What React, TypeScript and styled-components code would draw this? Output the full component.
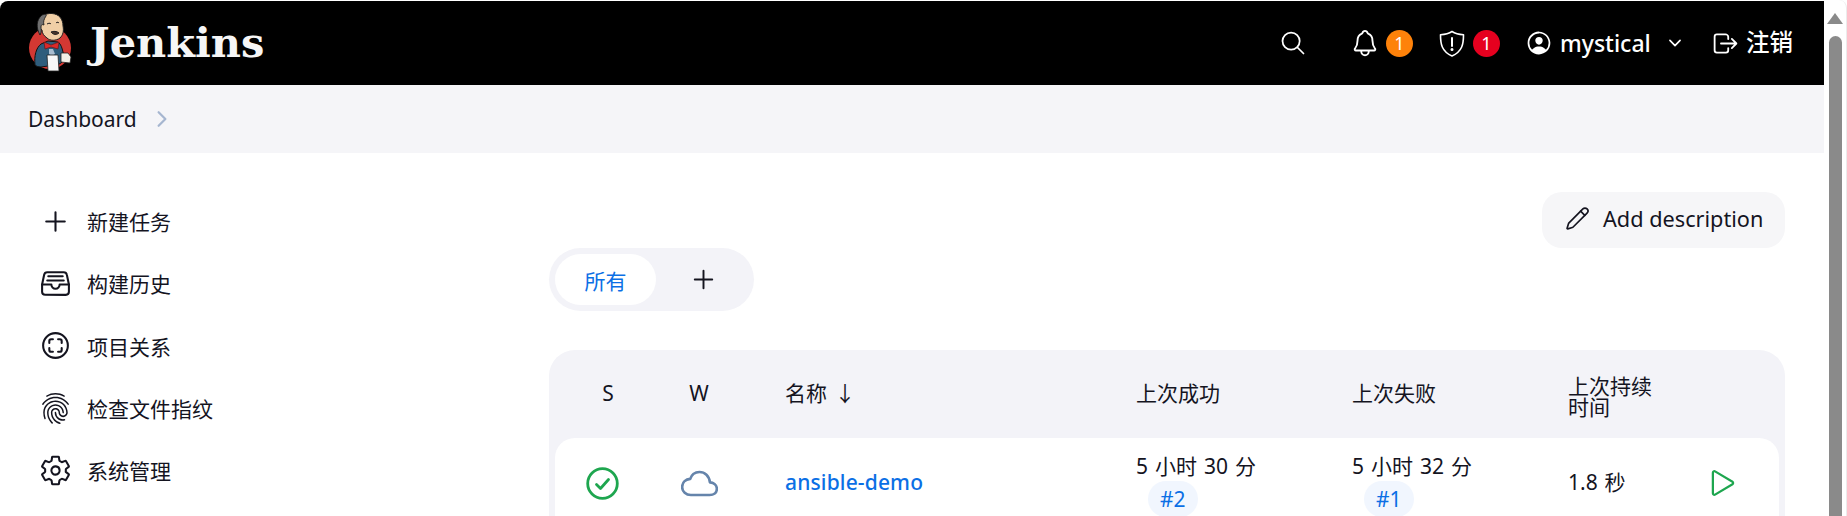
import React from "react";
import styled, { createGlobalStyle } from "styled-components";
import {
  IoAddOutline, IoFileTrayFullOutline, IoScanCircleOutline, IoFingerPrintOutline,
  IoSettingsOutline, IoSearchOutline, IoNotificationsOutline,
  IoPersonCircleOutline, IoChevronDownOutline, IoLogOutOutline, IoCloudOutline,
  IoPlayOutline, IoChevronForwardOutline,
} from "react-icons/io5";
import { Pencil } from "lucide-react";

const Global = createGlobalStyle`
  html, body { margin: 0; height: 100%; overflow: hidden; background: #fff; }
  body { font-family: "Noto Sans", "Noto Sans CJK SC", sans-serif; color: #14141f; font-size: 21px; }
`;

const Page = styled.div`
  display: flex;
  width: 1847px;
  height: 516px;
  overflow: hidden;
  background: #fff;
`;
const Content = styled.div`
  width: 1824px;
  flex: none;
`;
const Header = styled.header`
  height: 84px;
  margin-top: 1px;
  background: #000;
  border-top-left-radius: 8px;
  display: flex;
  align-items: center;
  padding: 0 31px 0 28px;
  color: #fff;
`;
const Brand = styled.div`
  display: flex;
  align-items: center;
  gap: 17px;
  margin-right: auto;
`;
const BrandName = styled.span`
  font-family: "DejaVu Serif", serif;
  font-weight: 700;
  font-size: 41.5px;
  line-height: 1;
  color: #f6f6f6;
`;
const HeaderGroup = styled.div`
  display: flex;
  align-items: center;
`;
const IconSlot = styled.span<{ $w: number; $ml?: number; $mr?: number; $c?: string }>`
  display: flex;
  align-items: center;
  justify-content: center;
  width: ${(p) => p.$w}px;
  margin-left: ${(p) => p.$ml ?? 0}px;
  margin-right: ${(p) => p.$mr ?? 0}px;
  color: ${(p) => p.$c ?? "inherit"};
  flex: none;
`;
const Badge = styled.span<{ $bg: string }>`
  width: 27px;
  height: 27px;
  border-radius: 50%;
  background: ${(p) => p.$bg};
  color: #fff;
  font-size: 18px;
  font-weight: 400;
  line-height: 27px;
  text-align: center;
  flex: none;
`;
const UserName = styled.span`
  font-size: 23px;
  font-weight: 500;
  line-height: 1;
  width: 92px;
  white-space: nowrap;
`;
const Logout = styled.span`
  font-size: 23.5px;
  font-weight: 500;
  line-height: 1;
  width: 47px;
  white-space: nowrap;
`;
const Crumbs = styled.nav`
  height: 68px;
  background: #f5f5f8;
  display: flex;
  align-items: center;
  padding-left: 28px;
  gap: 13px;
  color: #14141f;
`;
const Crumb = styled.span`
  font-size: 21px;
  line-height: 1;
`;
const Body = styled.div`
  display: grid;
  grid-template-columns: 549px 1236px;
  padding-top: 39px;
`;
const Side = styled.aside`
  display: flex;
  flex-direction: column;
  margin-top: -2px;
  padding-left: 39px;
`;
const SideItem = styled.a`
  display: flex;
  align-items: center;
  height: 62.3px;
  gap: 15px;
  font-size: 21px;
  color: #14141f;
`;
const SideIcon = styled.span`
  display: flex;
  align-items: center;
  justify-content: center;
  width: 33px;
  height: 33px;
  flex: none;
`;
const Main = styled.main`
  display: flex;
  flex-direction: column;
`;
const Actions = styled.div`
  display: flex;
  justify-content: flex-end;
  height: 56px;
`;
const ActionButton = styled.button`
  display: flex;
  align-items: center;
  gap: 13px;
  width: 243px;
  height: 56px;
  padding: 0 0 3px 23px;
  border: 0;
  border-radius: 20px;
  background: #f6f6f8;
  font: inherit;
  font-size: 21.7px;
  color: #14141f;
  white-space: nowrap;
`;
const Tabs = styled.div`
  display: flex;
  align-items: center;
  width: 205px;
  height: 63px;
  padding: 6px;
  box-sizing: border-box;
  border-radius: 32px;
  background: #f3f3f8;
  margin-bottom: 39px;
`;
const ActiveTab = styled.span`
  display: flex;
  align-items: center;
  justify-content: center;
  flex: none;
  width: 101px;
  height: 51px;
  border-radius: 26px;
  background: #fff;
  color: #0b6fe5;
  font-size: 21px;
`;
const AddTab = styled.span`
  display: flex;
  align-items: center;
  justify-content: center;
  flex: none;
  width: 94px;
  color: #14141f;
`;
const Table = styled.div`
  background: #f3f3f8;
  border-radius: 26px 26px 0 0;
  padding: 0 6px;
  height: 200px;
`;
const HeadRow = styled.div`
  display: grid;
  grid-template-columns: 106px 76px 48px 351px 216px 216px 1fr;
  align-items: center;
  height: 88px;
  padding-bottom: 2px;
  box-sizing: border-box;
`;
const HeadCell = styled.div<{ $center?: boolean; $wrapped?: boolean }>`
  font-size: 21px;
  line-height: ${(p) => (p.$wrapped ? 21 : 23)}px;
  margin-top: ${(p) => (p.$wrapped ? 7 : 0)}px;
  word-spacing: 2px;
  color: #14141f;
  justify-self: ${(p) => (p.$center ? "center" : "start")};
`;
const Row = styled.div`
  display: grid;
  grid-template-columns: 94px 100px 36px 351px 216px 216px 123px 64px;
  align-items: center;
  height: 90px;
  background: #fff;
  border-radius: 20px 20px 0 0;
`;
const Cell = styled.div<{ $stacked?: boolean }>`
  font-size: 21px;
  line-height: 28px;
  word-spacing: 1.5px;
  display: flex;
  flex-direction: column;
  align-items: flex-start;
  margin-bottom: 2px;
  padding-top: ${(p) => (p.$stacked ? 5 : 0)}px;
`;
const IconCell = styled.div`
  display: flex;
  justify-content: center;
`;
const CloudIcon = styled(IoCloudOutline)`
  path { stroke-width: 36px; }
`;
const JobLink = styled.a`
  color: #0b6fe5;
  font-weight: 500;
  letter-spacing: 0.15px;
`;
const BuildPill = styled.span`
  margin: 1px 0 0 12px;
  padding: 4px 12px 3px;
  border-radius: 20px;
  background: #f1f6fe;
  color: #0b6fe5;
  font-size: 21px;
  line-height: 29px;
`;
const Scroll = styled.div`
  flex: none;
  width: 23px;
  box-sizing: border-box;
  background: #fff;
  border-right: 1px solid #ececec;
  border-top-right-radius: 8px;
  display: flex;
  flex-direction: column;
  align-items: center;
`;
const ScrollArrow = styled.div`
  width: 0;
  height: 0;
  margin-top: 13px;
  border-left: 8px solid transparent;
  border-right: 8px solid transparent;
  border-bottom: 11px solid #8a8a8a;
`;
const ScrollThumb = styled.div`
  width: 13px;
  margin-top: 12px;
  flex: 1;
  background: #8a8a8a;
  border-radius: 7px 7px 0 0;
`;

const JenkinsLogo = () => (
  <svg width="45" height="60" viewBox="0 0 45 60" aria-hidden="true">
    <circle cx="22" cy="35" r="21" fill="#d33833" />
    <path d="M7 52c-1-9 1-17 6-21l7-3 10 1c3 2 4 6 5 10l1 8c-2 3-6 5-9 5l-14 2c-3 0-5-1-6-2z" fill="#2f5d7c" stroke="#111" strokeWidth="1" />
    <path d="M10 11C10 4 17 0 24 0.500 31 1 35 6 35 13c1 5 0 9-3 12-4 3-10 3-13 0-3-2-5-5-5-8-2-1-4-3-4-6z" fill="#f0cfa6" stroke="#222" strokeWidth="1" />
    <path d="M12 22C8 15 8 7 14 2c3-1 5-1 4 1-2 3-3 6-2 9-2-1-3 0-3 2s1 5-1 8z" fill="#6f6f6f" stroke="#111" strokeWidth="0.8" />
    <path d="M23 19c2-1 6-1 8 1-2 2-6 2-8-1zM19 11c2-1 3-1 4 0M28 10c1-1 2-1 3 0" fill="#49352b" stroke="#222" strokeWidth="1" />
    <path d="M16 29l7 3 8-3-1 7-7-2-6 2z" fill="#d92a2a" stroke="#5a1010" strokeWidth="0.6" />
    <path d="M21 36h4l2 5-3 2-3-2z" fill="#a9bdd0" />
    <path d="M19 42h11l1 16H20z" fill="#f8f8f8" stroke="#222" strokeWidth="0.8" />
    <path d="M33 40h7l3 4-1 6-9-1z" fill="#f2efe6" stroke="#222" strokeWidth="0.8" />
  </svg>
);

const ShieldAlert = () => (
  <svg width="26" height="27" viewBox="0 0 26 27" fill="none" stroke="#fff" strokeWidth="1.6" strokeLinecap="round" strokeLinejoin="round" aria-hidden="true">
    <path d="M13 1.500c3 2 7 3 11.500 3.300 0 9-1 16.500-11.500 21.200C2.500 21.300 1.500 13.800 1.500 4.800 6 4.500 10 3.500 13 1.500z" />
    <path d="M13 8v8" strokeWidth="2" />
    <circle cx="13" cy="19.500" r="0.700" fill="#fff" />
  </svg>
);

const SuccessIcon = () => (
  <svg width="33" height="33" viewBox="0 0 33 33" fill="none" aria-hidden="true">
    <circle cx="16.500" cy="16.500" r="14.800" stroke="#1ea64f" strokeWidth="2.800" />
    <path d="M10.500 17.500l4 4 8-9" stroke="#1ea64f" strokeWidth="2.800" strokeLinecap="round" strokeLinejoin="round" />
  </svg>
);

const sideItems: [React.ReactNode, string][] = [
  [<IoAddOutline size={33} />, "新建任务"],
  [<IoFileTrayFullOutline size={33} />, "构建历史"],
  [<IoScanCircleOutline size={33} />, "项目关系"],
  [<IoFingerPrintOutline size={33} />, "检查文件指纹"],
  [<IoSettingsOutline size={33} />, "系统管理"],
];

export default function App() {
  return (
    <Page>
      <Global />
      <Content>
        <Header>
          <Brand>
            <JenkinsLogo />
            <BrandName>Jenkins</BrandName>
          </Brand>
          <HeaderGroup>
            <IconSlot $w={28} $mr={43}><IoSearchOutline size={28} /></IconSlot>
            <IconSlot $w={30} $mr={6}><IoNotificationsOutline size={30} /></IconSlot>
            <Badge $bg="#fe820a">1</Badge>
            <IconSlot $w={26} $ml={26} $mr={8}><ShieldAlert /></IconSlot>
            <Badge $bg="#e6001f">1</Badge>
            <IconSlot $w={28} $ml={25} $mr={7}><IoPersonCircleOutline size={28} /></IconSlot>
            <UserName>mystical</UserName>
            <IconSlot $w={18} $ml={14} $mr={27}><IoChevronDownOutline size={20} /></IconSlot>
            <IconSlot $w={29} $mr={6}><IoLogOutOutline size={29} /></IconSlot>
            <Logout>注销</Logout>
          </HeaderGroup>
        </Header>
        <Crumbs>
          <Crumb>Dashboard</Crumb>
          <IconSlot $w={24} $c="#a6b6d0"><IoChevronForwardOutline size={24} /></IconSlot>
        </Crumbs>
        <Body>
          <Side>
            {sideItems.map(([icon, label]) => (
              <SideItem key={label}>
                <SideIcon>{icon}</SideIcon>
                {label}
              </SideItem>
            ))}
          </Side>
          <Main>
            <Actions>
              <ActionButton>
                <Pencil size={25} strokeWidth={1.6} />
                Add description
              </ActionButton>
            </Actions>
            <Tabs>
              <ActiveTab>所有</ActiveTab>
              <AddTab><IoAddOutline size={31} /></AddTab>
            </Tabs>
            <Table>
              <HeadRow>
                <HeadCell $center>S</HeadCell>
                <HeadCell $center>W</HeadCell>
                <HeadCell />
                <HeadCell>名称 ↓</HeadCell>
                <HeadCell>上次成功</HeadCell>
                <HeadCell>上次失败</HeadCell>
                <HeadCell $wrapped>上次持续<br />时间</HeadCell>
              </HeadRow>
              <Row>
                <IconCell><SuccessIcon /></IconCell>
                <IconCell><CloudIcon size={37} color="#6584ab" /></IconCell>
                <Cell />
                <Cell><JobLink>ansible-demo</JobLink></Cell>
                <Cell $stacked>5 小时 30 分<BuildPill>#2</BuildPill></Cell>
                <Cell $stacked>5 小时 32 分<BuildPill>#1</BuildPill></Cell>
                <Cell>1.8 秒</Cell>
                <IconCell><IoPlayOutline size={36} color="#1ea64f" /></IconCell>
              </Row>
            </Table>
          </Main>
        </Body>
      </Content>
      <Scroll>
        <ScrollArrow />
        <ScrollThumb />
      </Scroll>
    </Page>
  );
}
